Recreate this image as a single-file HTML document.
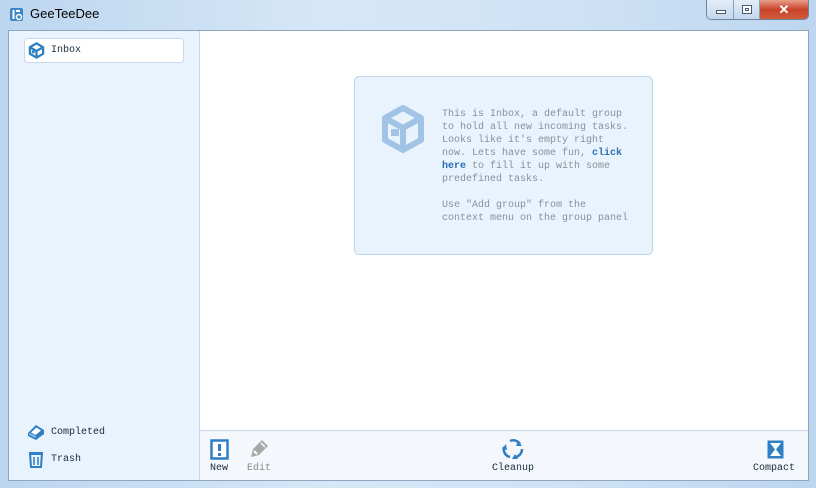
<!DOCTYPE html>
<html><head><meta charset="utf-8"><style>
*{margin:0;padding:0;box-sizing:border-box}
body{width:816px;height:488px;overflow:hidden;background:linear-gradient(90deg,#bcd6ef,#d6e7f7 40%,#cfe2f5 70%,#bcd6ef);font-family:"Liberation Mono",monospace;position:relative}
.abs{position:absolute}
.title{left:30px;top:6px;font:13px "Liberation Sans",sans-serif;color:#000}
.client{left:8px;top:30px;width:801px;height:451px;border:1px solid #8ea6c0;background:#fff;overflow:hidden}
.side{left:0;top:0;width:191px;height:449px;background:#e9f3fd;border-right:1px solid #c5d6e8}
.inbox{left:15px;top:7px;width:160px;height:25px;background:#fff;border:1px solid #c6d9ec;border-radius:4px}
.lbl{font-size:10px;color:#1a2a3a}
.tb{left:191px;top:399px;width:608px;height:50px;background:#f4f8fc;border-top:1px solid #c5d6e8}
.card{left:345px;top:45px;width:299px;height:179px;background:#e9f3fd;border:1px solid #bcd3ea;border-radius:5px}
.txt{left:87px;top:31px;font-size:10px;line-height:13px;color:#8a9099;white-space:pre}
.txt b{color:#2a6fb0;font-weight:bold}
</style></head><body>
<svg class="abs" style="left:9px;top:7px" width="15" height="15" viewBox="0 0 15 15"><rect x="1" y="1" width="13" height="13" rx="2" fill="#3a86c8"/><rect x="3.5" y="3" width="2" height="9" fill="#fff"/><rect x="7" y="3" width="4" height="2" fill="#fff"/><circle cx="10" cy="10" r="2.5" fill="none" stroke="#fff" stroke-width="1.5"/></svg>
<div class="abs title">GeeTeeDee</div>
<div class="abs" style="left:706px;top:0;width:103px;height:20px;border:1px solid #6f86a0;border-top:none;border-radius:0 0 5px 5px;overflow:hidden;display:flex">
<div style="width:27px;background:linear-gradient(#e4eef9,#c3d6ec);border-right:1px solid #8aa0b8;position:relative"><div class="abs" style="left:9px;top:10px;width:10px;height:4px;background:#fff;border:1px solid #4a5b6e"></div></div>
<div style="width:26px;background:linear-gradient(#e4eef9,#c3d6ec);border-right:1px solid #8aa0b8;position:relative"><div class="abs" style="left:8px;top:5px;width:10px;height:9px;border:1px solid #4a5b6e;background:#fff"><div style="margin:2px;height:3px;border:1px solid #4a5b6e"></div></div></div>
<div style="flex:1;background:linear-gradient(#e8a08a,#c8432a 50%,#d05a3a);color:#fff;font:bold 13px 'Liberation Sans',sans-serif;text-align:center;line-height:19px">✕</div></div>
<div class="abs client">
<div class="abs side">
<div class="abs inbox"><svg class="abs" style="left:3px;top:3px" width="17" height="17" viewBox="0 0 18 18"><path d="M9 1.5L16 5.5V12.5L9 16.5L2 12.5V5.5Z M2 5.5L9 9.5L16 5.5 M9 9.5V16.5" fill="none" stroke="#2f7fc4" stroke-width="2.4" stroke-linejoin="round"/><rect x="4" y="9" width="3" height="3" fill="#2f7fc4"/></svg><div class="abs lbl" style="left:26px;top:6px">Inbox</div></div>
<svg class="abs" style="left:18px;top:392px" width="18" height="18" viewBox="0 0 18 18"><path d="M1 10L9 2L17 7V11L9 17L1 13Z" fill="#2f7fc4"/><path d="M4 9.5L9.5 4.5L14 7.5L8.5 12Z" fill="#fff"/><path d="M2 11.5L8.5 15V13L2 10Z" fill="#9cc4e8"/></svg>
<div class="abs lbl" style="left:42px;top:396px">Completed</div>
<svg class="abs" style="left:19px;top:419px" width="16" height="19" viewBox="0 0 16 19"><path d="M2 3H14L13 17H3Z" fill="none" stroke="#2f7fc4" stroke-width="2"/><rect x="1" y="2" width="14" height="3" rx="1.5" fill="#2f7fc4"/><path d="M6 7V15M10 7V15" stroke="#2f7fc4" stroke-width="1.5"/></svg>
<div class="abs lbl" style="left:42px;top:423px">Trash</div>
</div>
<div class="abs card">
<svg class="abs" style="left:26px;top:28px" width="44" height="48" viewBox="0 0 44 48"><path d="M22 3L40 13V35L22 45L4 35V13Z M4 13L22 23L40 13 M22 23V45" fill="none" stroke="#a0c3e6" stroke-width="6" stroke-linejoin="round"/><rect x="10" y="24" width="8" height="7" fill="#a0c3e6"/></svg>
<div class="abs txt">This is Inbox, a default group
to hold all new incoming tasks.
Looks like it's empty right
now. Lets have some fun, <b>click</b>
<b>here</b> to fill it up with some
predefined tasks.

Use "Add group" from the
context menu on the group panel</div></div>
<div class="abs tb">
<svg class="abs" style="left:10px;top:8px" width="19" height="21" viewBox="0 0 19 21"><rect x="1.5" y="1.5" width="16" height="18" fill="#fff" stroke="#2f7fc4" stroke-width="2.5"/><rect x="8" y="5" width="3" height="7" fill="#2f7fc4"/><rect x="8" y="14" width="3" height="3" fill="#2f7fc4"/></svg>
<div class="abs lbl" style="left:10px;top:32px">New</div>
<svg class="abs" style="left:49px;top:6px" width="22" height="22" viewBox="0 0 22 22"><path d="M2 20L4 12L13 3L19 9L10 18Z" fill="#a8a8a8"/><path d="M5 14L8 17" stroke="#fff" stroke-width="2"/><path d="M12 6L16 10" stroke="#fff" stroke-width="1.5"/></svg>
<div class="abs lbl" style="left:47px;top:32px;color:#8a8a8a">Edit</div>
<svg class="abs" style="left:301px;top:7px" width="24" height="22" viewBox="0 0 24 22"><path d="M9 3A8 8 0 0 1 19 6M21 11A8 8 0 0 1 15 19M9 19A8 8 0 0 1 3 9" fill="none" stroke="#2f7fc4" stroke-width="2.5"/><path d="M17 3L21 8L15 8Z M11 21L14 16L17 21Z M1 11L5 6L6 12Z" fill="#2f7fc4"/></svg>
<div class="abs lbl" style="left:292px;top:32px">Cleanup</div>
<svg class="abs" style="left:566px;top:8px" width="19" height="21" viewBox="0 0 19 21"><rect x="1.5" y="1.5" width="16" height="18" fill="#2f7fc4"/><path d="M4 4H15L10 10.5L15 17H4L9 10.5Z" fill="#fff"/></svg>
<div class="abs lbl" style="left:553px;top:32px">Compact</div>
</div>
</div>
</body></html>
